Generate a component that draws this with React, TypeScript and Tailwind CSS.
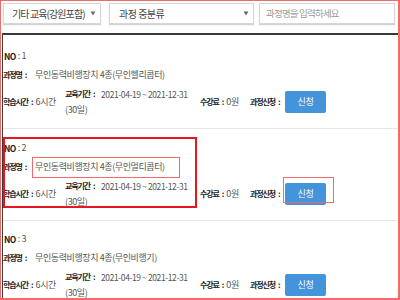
import React from "react";

type Item = { no: number; name: string; pt: string; highlight?: boolean };

const items: Item[] = [
  { no: 1, name: "무인동력비행장치 4종(무인헬리콥터)", pt: "pt-[15px]" },
  { no: 2, name: "무인동력비행장치 4종(무인멀티콥터)", pt: "pt-[13px]", highlight: true },
  { no: 3, name: "무인동력비행장치 4종(무인비행기)", pt: "pt-[12px]" },
];

function Label({ text, className = "" }: { text: string; className?: string }) {
  return (
    <span className={"font-bold text-[8px] tracking-[-1.1px] text-[#222] " + className}>
      {text}
      <span className="ml-[3px]">:</span>
    </span>
  );
}

function Value({ children, className = "" }: { children: React.ReactNode; className?: string }) {
  return <span className={"text-[9px] tracking-[-0.4px] text-[#555] " + className}>{children}</span>;
}

function Arrow() {
  return (
    <svg width="6" height="5" viewBox="0 0 6 5" className="shrink-0">
      <path d="M0.5 0.5 L5.5 0.5 L3 4.5 Z" fill="#6b6b6b" />
    </svg>
  );
}

function CourseItem({ item }: { item: Item }) {
  return (
    <div className={"relative border-b border-[#e6e6e6] pb-[10px] " + item.pt}>
      <div className="h-[12px] leading-[12px] flex items-center pl-[1px]">
        <span className="font-bold text-[8.5px] tracking-[-0.6px] text-[#222]">NO</span>
        <Value className="ml-[2px]">: {item.no}</Value>
      </div>
      <div className="mt-[7px] h-[12px] leading-[12px] flex items-center">
        <Label text="과정명" className="w-[32px] shrink-0" />
        <Value className="text-[9.5px]">{item.name}</Value>
      </div>
      <div className="mt-[5px] h-[32px] flex items-center">
        <div className="w-[62px] shrink-0 flex items-center">
          <Label text="학습시간" />
          <Value className="ml-[3px]">6시간</Value>
        </div>
        <div className="w-[135px] shrink-0 leading-[16px]">
          <div className="flex items-center h-[16px]">
            <Label text="교육기간" className="w-[36px] shrink-0" />
            <span className="text-[8.5px] tracking-[-0.4px] text-[#555]">2021-04-19 ~ 2021-12-31</span>
          </div>
          <div className="h-[16px] flex items-center">
            <Value>(30일)</Value>
          </div>
        </div>
        <div className="w-[50px] shrink-0 flex items-center">
          <Label text="수강료" />
          <Value className="ml-[3px]">0원</Value>
        </div>
        <div className="w-[35px] shrink-0 flex items-center">
          <Label text="과정신청" />
        </div>
        <button className="w-[41px] h-[22px] rounded-[2px] bg-[#4394da] text-white text-[9px] tracking-[-0.4px] flex items-center justify-center">
          신청
        </button>
      </div>
      {item.highlight && (
        <>
          <div className="absolute left-0 top-[8px] w-[194px] h-[71px] border-2 border-[#e8141e] pointer-events-none" />
          <div className="absolute left-[29px] top-[28px] w-[148px] h-[21px] border-[1.5px] border-[#ef6b6b] pointer-events-none" />
          <div className="absolute left-[280px] top-[48px] w-[51px] h-[26px] border-[1.5px] border-[#ef6b6b] pointer-events-none" />
        </>
      )}
    </div>
  );
}

export default function App() {
  return (
    <div className="relative w-[400px] h-[300px] overflow-hidden bg-white font-['Noto_Sans_CJK_KR',sans-serif]">
      <div className="flex pt-[3px] pl-[3px]">
        <div className="w-[98px] h-[21px] border border-[#d6d6d6] shadow-[0_1px_1px_rgba(0,0,0,0.18)] flex items-center justify-between pl-[8px] pr-[4px]">
          <span className="text-[10px] tracking-[-0.9px] text-[#444] whitespace-nowrap">기타 교육(강원포함)</span>
          <Arrow />
        </div>
        <div className="ml-[8px] w-[145px] h-[21px] border border-[#d6d6d6] shadow-[0_1px_1px_rgba(0,0,0,0.18)] flex items-center justify-between pl-[9px] pr-[4px]">
          <span className="text-[10px] tracking-[-0.5px] text-[#444]">과정 중분류</span>
          <Arrow />
        </div>
        <div className="ml-[5px] w-[136px] h-[21px] border border-[#d6d6d6] shadow-[0_1px_1px_rgba(0,0,0,0.18)] flex items-center pl-[6px]">
          <span className="text-[9.5px] tracking-[-0.8px] text-[#9a9a9a]">과정명을 입력하세요</span>
        </div>
      </div>
      <div className="mt-[9px] ml-[2px] border-t-2 border-l border-[#3a3a3a]">
        {items.map((it) => (
          <CourseItem key={it.no} item={it} />
        ))}
      </div>
      <div className="absolute inset-0 border-t border-l-[1.5px] border-r-2 border-b-2 border-[#f26b6b] pointer-events-none" />
    </div>
  );
}
